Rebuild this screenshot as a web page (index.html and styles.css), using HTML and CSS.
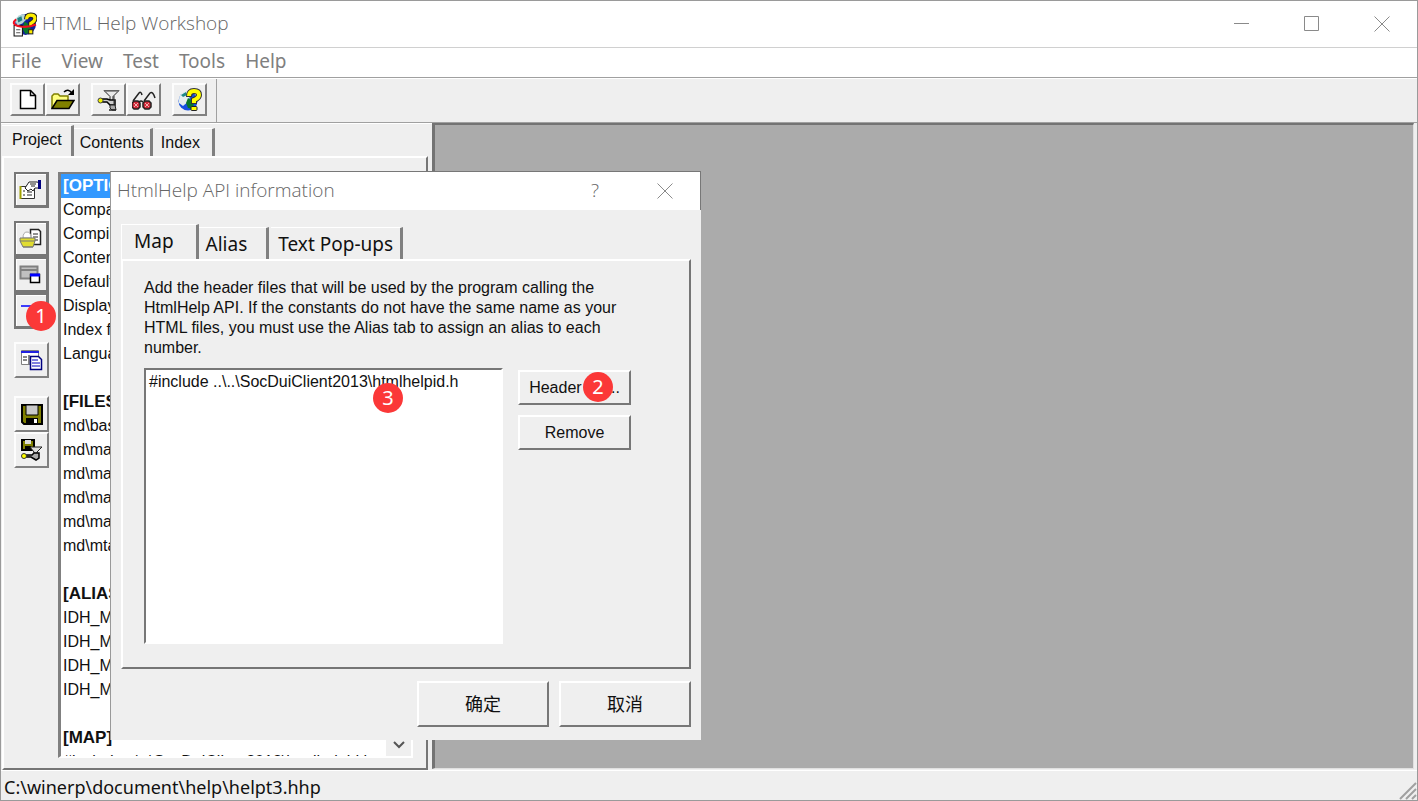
FILE: index.html
```html
<!DOCTYPE html>
<html lang="en">
<head>
    <meta charset="UTF-8">
    <meta name="viewport" content="width=device-width, initial-scale=1.0">
    <title>HTML Help Workshop</title>
    <link rel="stylesheet" href="styles.css">
</head>
<body>
    <div class="window">
        <header class="titlebar">
            <svg class="app-icon" viewBox="0 0 24 24">
                <circle cx="13" cy="12" r="10" fill="#10209a"/>
                <path d="M3 8q3-6 9-6l2 5-4 4-5 2z" fill="#b5d5d5"/>
                <path d="M5 6l4-2 1 4-4 2z" fill="#208080"/>
                <path d="M12 9l6 4-1 7-4 1-3-5z" fill="#0b7a2a"/>
                <path d="M2 13h8v10H2z" fill="#fff" stroke="#111"/>
                <path d="M4 17h4M4 20h4" stroke="#555"/>
                <path d="M14 7q0-4 4-4t4 3q0 3-4 5v3" fill="none" stroke="#222" stroke-width="5"/>
                <path d="M14 7q0-4 4-4t4 3q0 3-4 5v3" fill="none" stroke="#ffee00" stroke-width="3"/>
                <path d="M4 7q-6 5 4 7 8 1 15-2" fill="none" stroke="#f01020" stroke-width="2"/>
                <rect x="16" y="17" width="4" height="4" fill="#ffee00" stroke="#222"/>
            </svg>
            <h1>HTML Help Workshop</h1>
            <div class="caption-buttons">
                <button aria-label="Minimize"><svg viewBox="0 0 16 16"><path d="M0 7.500h15"/></svg></button>
                <button aria-label="Maximize"><svg viewBox="0 0 16 16"><path d="M.5.5h14v14H.5z"/></svg></button>
                <button aria-label="Close"><svg viewBox="0 0 16 16"><path d="M.5.5l15 15M15.500.5l-15 15"/></svg></button>
            </div>
        </header>
        <nav class="menu">
            <a href="#">File</a>
            <a href="#">View</a>
            <a href="#">Test</a>
            <a href="#">Tools</a>
            <a href="#">Help</a>
        </nav>
        <div class="toolbar">
            <div class="tool-group">
                <button class="tool" aria-label="New">
                    <svg viewBox="0 0 24 24"><path d="M4.500 2.500h10l5 5v13h-15z" fill="#fff" stroke="#000" stroke-width="1.500"/><path d="M14.500 2.500v5h5" fill="none" stroke="#000" stroke-width="1.500"/></svg>
                </button>
                <button class="tool" aria-label="Open">
                    <svg viewBox="0 0 24 24"><path d="M1 20V8l2-2h4l2 2h8v4" fill="#ffff80" stroke="#808000" stroke-width="1.500"/><path d="M1 20.500l5-8h17l-5 8z" fill="#808000" stroke="#000" stroke-width="1.500"/><path d="M13 4q4-4 8 1" fill="none" stroke="#000" stroke-width="1.500"/><path d="M23 1v6h-6z"/></svg>
                </button>
            </div>
            <div class="tool-group">
                <button class="tool" aria-label="Compile HTML file">
                    <svg viewBox="0 0 24 24"><path d="M7 2.500h15l-6 6v4h-3v-4z" fill="#e8e8e8" stroke="#222"/><path d="M7 3h15" stroke="#777" stroke-width="1.500"/><path d="M5 11h5l3 1h5v5h-5l-3-3H5z" fill="#ccc" stroke="#000" stroke-width="1.500"/><path d="M17 8v10" stroke="#333"/><circle cx="3.500" cy="12.500" r="2.500" fill="#f0f000" stroke="#444"/><path d="M13 17h5l1 5h-4l-2-2z" fill="#aaa" stroke="#222"/><path d="M12 22h7" stroke="#222" stroke-width="1.500"/></svg>
                </button>
                <button class="tool" aria-label="View compiled file">
                    <svg viewBox="0 0 24 24"><path d="M1 13L7 5q2-2 3 2M12 13l6-8q3-2 5 5M7 14q2-2 4 0" fill="none" stroke="#222" stroke-width="1.500"/><path d="M2 13h4l2 2v4l-2 2H2l-2-2v-4zM13 13h4l2 2v4l-2 2h-4l-2-2v-4z" fill="#d02838" stroke="#222" stroke-width="1.500"/><path d="M2 15l4 4M6 15l-4 4M13 15l4 4M17 15l-4 4" stroke="#f0b0b0"/></svg>
                </button>
            </div>
            <div class="tool-group">
                <button class="tool" aria-label="Help">
                    <svg viewBox="0 0 24 24"><circle cx="10" cy="13" r="9.500" fill="#1550e0"/><path d="M1 12Q1 5 8 3l4 3-1 7-6 5-4-3z" fill="#e4eeee"/><path d="M3 7l5-3 1 3-4 2z" fill="#208888"/><path d="M10 10l6 4-1 7-5-1-2-5z" fill="#087828"/><path d="M11 9q0-6 5-6t5 4q0 3-5 5v4" fill="none" stroke="#333" stroke-width="6"/><path d="M11 8q0-5 5-5t5 4q0 3-5 5v3" fill="none" stroke="#ffff00" stroke-width="4"/><rect x="13" y="18.500" width="6" height="4" rx="1" fill="#ffff00" stroke="#222"/></svg>
                </button>
            </div>
        </div>
        <main class="workspace">
            <section class="sidebar">
                <div class="tabs">
                    <button class="tab active">Project</button>
                    <button class="tab">Contents</button>
                    <button class="tab">Index</button>
                </div>
                <div class="tab-page project-page">
                    <div class="side-tools">
                        <div class="side-group">
                            <button class="tool framed" aria-label="Change project options">
                                <svg viewBox="0 0 24 24"><path d="M1.500 8.500h14v12h-14z" fill="#fff" stroke="#333"/><path d="M1.500 21V8" stroke="#a0a000" stroke-width="2"/><path d="M6 10l4-6h8l3 1v5h-5l-2 3-2-2-3 2z" fill="#fff" stroke="#222"/><path d="M19 2h3v9h-3z" fill="#000080"/><path d="M4 13h2M4 17h2M8 14h5M8 17h5M11 6h6M12 8h4" stroke="#222"/></svg>
                            </button>
                        </div>
                        <div class="side-group">
                            <button class="tool framed" aria-label="Add or remove topic files">
                                <svg viewBox="0 0 24 24"><path d="M11.500 2.500h8l2 2v13h-10z" fill="#fff" stroke="#222" stroke-width="1.500"/><path d="M14 7h5M14 10h5M14 13h5" stroke="#222"/><path d="M4 11q0-6 4-6t4 6z" fill="#fff" stroke="#aaa"/><path d="M1 11h15v3l-2 6H4l-3-6z" fill="#e0dc30" stroke="#777"/><path d="M1 14h15M4 20h10" stroke="#777"/></svg>
                            </button>
                            <button class="tool framed" aria-label="Add or modify window definitions">
                                <svg viewBox="0 0 24 24"><path d="M1.500 3.500h17v12h-17z" fill="#c0c0c0" stroke="#808080" stroke-width="2"/><path d="M2 7h16" stroke="#808080" stroke-width="2"/><path d="M11.500 11.500h9v8h-9z" fill="#fff" stroke="#000" stroke-width="1.500"/><path d="M11 12h10" stroke="#0000ff" stroke-width="3"/></svg>
                            </button>
                            <button class="tool framed" aria-label="HtmlHelp API information">
                                <svg viewBox="0 0 24 24"><path d="M2 7h12" stroke="#0000ff" stroke-width="1.500"/></svg>
                                <span class="badge badge-one">1</span>
                            </button>
                        </div>
                        <div class="side-group">
                            <button class="tool" aria-label="View HTML source">
                                <svg viewBox="0 0 24 24"><path d="M1.500 2.500h17v14h-17z" fill="#fff" stroke="#808080"/><path d="M1 4h18" stroke="#2020e0" stroke-width="2"/><path d="M3 9h4M3 12h4M9 7v9" stroke="#888" stroke-width="2"/><path d="M10.500 8.500h8l3 3v10h-11z" fill="#fff" stroke="#000080" stroke-width="1.500"/><path d="M12 12h6M12 15h8M12 18h8" stroke="#0000c0"/></svg>
                            </button>
                        </div>
                        <div class="side-group">
                            <button class="tool" aria-label="Save project">
                                <svg viewBox="0 0 24 24"><path d="M2 3h20v19H4l-2-2z" fill="#808000" stroke="#000" stroke-width="2"/><path d="M6 3h12v10H6z" fill="#c8c8c8" stroke="#000"/><path d="M6 16h12v6H6z"/><path d="M14 17h3v4h-3z" fill="#fff"/></svg>
                            </button>
                            <button class="tool" aria-label="Save project and compile">
                                <svg viewBox="0 0 24 24"><path d="M2 2h12v10H2z" fill="#808000" stroke="#000" stroke-width="2"/><path d="M5 2h6v4H5z" fill="#ddd"/><path d="M5 8h6v4H5z"/><path d="M10 9h12l-5 5v4h-3v-4z" fill="#ddd" stroke="#222"/><path d="M5 17h7l2-2h5v5l-3 2-5-3H5" fill="#aaa" stroke="#000" stroke-width="1.500"/><circle cx="4" cy="18" r="2.500" fill="#ffff00" stroke="#333"/></svg>
                            </button>
                        </div>
                    </div>
                    <div class="project-list">
                        <ul>
                            <li class="section selected">[OPTIONS]</li>
                            <li>Compatibility=1.1 or later</li>
                            <li>Compiled file=helpt3.chm</li>
                            <li>Contents file=helpt3.hhc</li>
                            <li>Default topic=md\main.html</li>
                            <li>Display compile progress=No</li>
                            <li>Index file=helpt3.hhk</li>
                            <li>Language=0x804</li>
                            <li></li>
                            <li class="section">[FILES]</li>
                            <li>md\base.html</li>
                            <li>md\main.html</li>
                            <li>md\main.html</li>
                            <li>md\main.html</li>
                            <li>md\main.html</li>
                            <li>md\mtask.html</li>
                            <li></li>
                            <li class="section">[ALIAS]</li>
                            <li>IDH_MAIN</li>
                            <li>IDH_MAIN</li>
                            <li>IDH_MAIN</li>
                            <li>IDH_MAIN</li>
                            <li></li>
                            <li class="section">[MAP]</li>
                            <li>#include ..\..\SocDuiClient2013\htmlhelpid.h</li>
                        </ul>
                        <div class="scrollbar">
                            <button aria-label="Scroll down"><svg viewBox="0 0 12 12"><path d="M1 4l5 5 5-5"/></svg></button>
                        </div>
                    </div>
                </div>
            </section>
            <section class="mdi"></section>
        </main>
        <footer class="statusbar">
            <span>C:\winerp\document\help\helpt3.hhp</span>
            <svg class="grip" viewBox="0 0 18 18"><path d="M1 17L17 1M7 17L17 7M13 17l4-4"/></svg>
        </footer>

        <div class="dialog" role="dialog" aria-labelledby="dialog-title">
            <header class="dialog-title">
                <h2 id="dialog-title">HtmlHelp API information</h2>
                <button class="help">?</button>
                <button aria-label="Close"><svg viewBox="0 0 16 16"><path d="M.5.5l15 15M15.500.5l-15 15"/></svg></button>
            </header>
            <div class="dialog-body">
                <div class="tabs">
                    <button class="tab active">Map</button>
                    <button class="tab">Alias</button>
                    <button class="tab">Text Pop-ups</button>
                </div>
                <div class="tab-page map-page">
                    <p>Add the header files that will be used by the program calling the HtmlHelp API. If the constants do not have the same name as your HTML files, you must use the Alias tab to assign an alias to each number.</p>
                    <div class="map-content">
                        <ul class="header-list">
                            <li>#include ..\..\SocDuiClient2013\htmlhelpid.h<span class="badge badge-three">3</span></li>
                        </ul>
                        <div class="map-buttons">
                            <button class="push">Header file...<span class="badge badge-two">2</span></button>
                            <button class="push">Remove</button>
                        </div>
                    </div>
                </div>
                <div class="dialog-actions">
                    <button class="push">确定</button>
                    <button class="push">取消</button>
                </div>
            </div>
        </div>
    </div>
</body>
</html>
```
FILE: styles.css
```css
* {
    box-sizing: border-box;
}

body {
    margin: 0;
    font-family: "Liberation Sans", Arial, sans-serif;
    font-size: 16px;
    color: #111;
    background: #efefef;
}

h1, h2, p, ul {
    margin: 0;
    padding: 0;
    font-weight: normal;
}

ul {
    list-style: none;
}

button {
    font: inherit;
    color: inherit;
    background: none;
    border: none;
    padding: 0;
}

svg {
    display: block;
    flex-shrink: 0;
}

/* Main window */
.window {
    position: relative;
    display: flex;
    flex-direction: column;
    height: 100vh;
    border: 1px solid #9a9a9a;
    background: #efefef;
    overflow: hidden;
}

.titlebar {
    display: flex;
    align-items: center;
    height: 47px;
    padding-left: 11px;
    background: white;
    border-bottom: 1px solid #d0d0d0;
}

.app-icon {
    width: 25px;
    height: 25px;
}

.titlebar h1 {
    flex: 1;
    margin-left: 5px;
}

.titlebar h1, .dialog-title h2, .dialog-title .help {
    font-family: "Open Sans", sans-serif;
    font-size: 19px;
    font-weight: 300;
    line-height: 24px;
    padding-bottom: 2px;
    color: #666;
}

.caption-buttons {
    display: flex;
}

.caption-buttons button {
    display: flex;
    justify-content: center;
    width: 70px;
}

.caption-buttons svg, .dialog-title svg {
    width: 16px;
    height: 16px;
    fill: none;
    stroke: #8a8a8a;
}

.menu {
    display: flex;
    align-items: center;
    gap: 20px;
    height: 30px;
    padding: 0 0 3px 10px;
    background: white;
    border-bottom: 1px solid #a0a0a0;
    font-family: "Noto Sans", sans-serif;
    font-size: 19px;
    line-height: 24px;
}

.menu a {
    color: #808080;
    text-decoration: none;
}

/* Toolbar */
.toolbar {
    display: flex;
    gap: 11px;
    height: 45px;
    padding: 4px 0 0 9px;
    border-top: 1px solid white;
    border-bottom: 1px solid #a0a0a0;
}

.tool-group {
    display: flex;
}

.tool-group:last-child {
    margin-top: -4px;
    padding: 4px 9px 0 0;
    border-right: 1px solid #a0a0a0;
}

.tool {
    position: relative;
    display: flex;
    align-items: center;
    justify-content: center;
    width: 35px;
    height: 33px;
    background: #efefef;
    border: 2px solid;
    border-color: #fdfdfd #808080 #808080 #fdfdfd;
}

.tool svg {
    width: 24px;
    height: 24px;
}

/* Workspace */
.workspace {
    display: flex;
    flex: 1;
    min-height: 0;
    padding-right: 3px;
}

.sidebar {
    display: flex;
    flex-direction: column;
    width: 431px;
    padding: 1px 4px 0 1px;
    border-top: 1px solid white;
}

.mdi {
    flex: 1;
    margin-bottom: 1px;
    background: #ababab;
    border-top: 2px solid #737373;
    border-left: 3px solid #737373;
    border-right: 1px solid #e0e0e0;
    border-bottom: 1px solid #e0e0e0;
}

.tabs {
    display: flex;
    align-items: flex-end;
}

.tab {
    border-top: 1px solid #fff;
    border-right: 3px solid #808080;
}

.tab-page {
    border: 2px solid;
    border-color: #fff #757575 #757575 #fff;
}

.sidebar .tab {
    height: 28px;
    padding: 0 6px;
    margin-right: 2px;
}

.sidebar .tab.active {
    height: 31px;
    padding: 0 9px 2px 10px;
    margin: 0;
}

.sidebar .tab:last-child {
    padding-right: 12px;
}

.project-page {
    display: flex;
    flex: 1;
    min-height: 0;
    gap: 9px;
    padding: 14px 13px 10px 10px;
}

.side-tools {
    display: flex;
    flex-direction: column;
    gap: 13px;
}

.side-group:last-child {
    margin-top: 5px;
}

.side-tools .tool {
    height: 36px;
}

.side-tools .framed {
    border: 3px solid #777;
    border-left-width: 2px;
    border-top-width: 2px;
    box-shadow: inset 1px 1px #fff;
}

.project-list {
    display: flex;
    flex: 1;
    background: white;
    border: 2px solid;
    border-color: #808080 #fff #fff #808080;
    border-left-width: 3px;
    overflow: hidden;
}

.project-list ul {
    flex: 1;
    white-space: nowrap;
    overflow: hidden;
}

.project-list li {
    height: 24px;
    padding-left: 2px;
    line-height: 23px;
}

.project-list .section {
    font-size: 17px;
    font-weight: bold;
}

.project-list .selected {
    color: white;
    background: #3399ff;
}

.scrollbar {
    display: flex;
    flex-direction: column;
    justify-content: flex-end;
    width: 25px;
    background: #efefef;
}

.scrollbar button {
    display: flex;
    align-items: center;
    justify-content: center;
    height: 24px;
}

.scrollbar svg {
    width: 12px;
    height: 12px;
    fill: none;
    stroke: #555;
    stroke-width: 2;
}

.statusbar {
    display: flex;
    justify-content: space-between;
    align-items: center;
    height: 30px;
    padding-left: 3px;
    border-top: 1px solid white;
    font-family: "Noto Sans", sans-serif;
    font-size: 18px;
    line-height: 28px;
}

.statusbar span {
    padding-top: 2px;
}

.grip {
    align-self: flex-end;
    width: 18px;
    height: 18px;
    fill: none;
    stroke: #a0a0a0;
    stroke-width: 2;
}

/* HtmlHelp API dialog */
.dialog {
    position: absolute;
    left: 109px;
    top: 170px;
    width: 591px;
    background: #efefef;
    border-top: 1px solid #777;
    border-left: 1px solid #999;
}

.dialog-title {
    display: flex;
    align-items: center;
    height: 38px;
    padding-left: 6px;
    background: white;
    border-right: 1px solid #777;
}

.dialog-title h2 {
    flex: 1;
}

.dialog-title button {
    display: flex;
    justify-content: center;
    width: 70px;
}

.dialog-body {
    padding: 14px 10px 13px 10px;
}

.dialog .tabs {
    gap: 2px;
}

.dialog .tab {
    height: 32px;
    padding: 0 7px;
    font-family: "Noto Sans", sans-serif;
    font-size: 19px;
}

.dialog .tab.active {
    height: 35px;
    padding: 0 22px 2px 12px;
    border-left: 1px solid #fff;
    margin-right: -2px;
}

.dialog .tab:nth-child(2) {
    padding-right: 19px;
}

.map-page {
    padding: 17px 58px 23px 21px;
}

.map-page p {
    max-width: 480px;
    line-height: 20px;
}

.map-content {
    display: flex;
    gap: 15px;
    margin-top: 10px;
}

.header-list {
    flex: 1;
    height: 276px;
    padding: 0 3px;
    background: white;
    border: 2px solid;
    border-color: #777 #fff #fff #777;
    line-height: 24px;
}

.header-list li {
    position: relative;
}

.map-buttons {
    display: flex;
    flex-direction: column;
    gap: 10px;
    width: 113px;
    padding-top: 2px;
}

.push {
    position: relative;
    height: 35px;
    border: 2px solid;
    border-color: #fff #777 #777 #fff;
}

.dialog-actions {
    display: flex;
    justify-content: flex-end;
    gap: 10px;
    margin-top: 12px;
    font-family: "Liberation Sans", "Noto Sans CJK SC", sans-serif;
    font-size: 18px;
}

.dialog-actions .push {
    width: 132px;
    height: 46px;
    padding-bottom: 2px;
}

/* Numbered markers */
.badge {
    position: absolute;
    width: 30px;
    height: 30px;
    border-radius: 50%;
    color: white;
    background: #fb3838;
    font-family: "Noto Sans", sans-serif;
    font-size: 20px;
    line-height: 30px;
    text-align: center;
}

.badge-one {
    left: 10px;
    top: 6px;
    z-index: 1;
}

.badge-two {
    left: 63px;
    top: 0;
}

.badge-three {
    left: 224px;
    top: 13px;
}
```
